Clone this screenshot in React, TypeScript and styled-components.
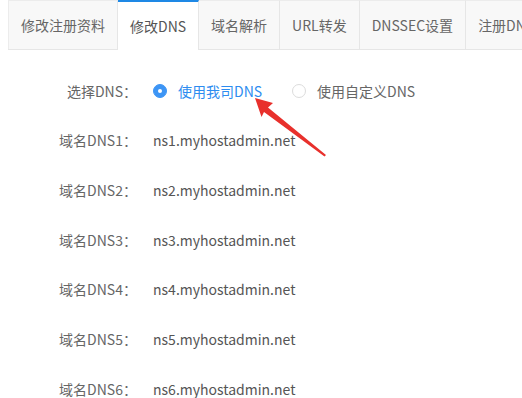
import React, { useState } from "react";
import styled, { createGlobalStyle } from "styled-components";

const GlobalStyle = createGlobalStyle`
  html, body {
    margin: 0;
    padding: 0;
    background: #fff;
    font-family: "Noto Sans CJK SC", "Noto Sans", sans-serif;
    color: #666;
  }
`;

const Page = styled.div`
  position: relative;
  width: 522px;
  height: 398px;
  overflow: hidden;
  padding-left: 8px;
  box-sizing: border-box;
`;

const TabBar = styled.div`
  display: flex;
  height: 50px;
  border-bottom: 1px solid #e6e6e6;
  box-sizing: border-box;
  white-space: nowrap;
`;

const Tab = styled.div<{ $active?: boolean; $first?: boolean }>`
  display: flex;
  align-items: center;
  flex-shrink: 0;
  padding: 0 12px;
  font-size: 14px;
  color: ${(p) => (p.$active ? "#555" : "#666")};
  background: ${(p) => (p.$active ? "#fff" : "#f8f8f8")};
  border-top: ${(p) => (p.$active ? "2px solid #1e88e5" : "1px solid #ececec")};
  border-right: 1px solid #e6e6e6;
  border-left: ${(p) => (p.$first ? "1px solid #ececec" : "none")};
  margin-bottom: ${(p) => (p.$active ? "-1px" : "0")};
  box-sizing: border-box;
`;

const Form = styled.div`
  padding-top: 16px;
`;

const Row = styled.div`
  display: grid;
  grid-template-columns: 129px 1fr;
  column-gap: 16px;
  align-items: center;
  height: 49.67px;
  font-size: 14px;
`;

const Label = styled.div`
  text-align: right;
  color: #666;
`;

const Value = styled.div`
  color: #555;
`;

const RadioGroup = styled.div`
  display: flex;
  align-items: center;
  gap: 30px;
`;

const Option = styled.label<{ $checked?: boolean }>`
  display: flex;
  align-items: center;
  gap: 11px;
  cursor: pointer;
  color: ${(p) => (p.$checked ? "#2d8cf0" : "#666")};
`;

const Dot = styled.span<{ $checked?: boolean }>`
  width: 14px;
  height: 14px;
  border-radius: 50%;
  box-sizing: border-box;
  background: ${(p) => (p.$checked ? "#3d95f5" : "#fff")};
  border: 1px solid ${(p) => (p.$checked ? "#3d95f5" : "#dcdcdc")};
  display: flex;
  align-items: center;
  justify-content: center;
  &::after {
    content: "";
    width: 4px;
    height: 4px;
    border-radius: 50%;
    background: #fff;
    display: ${(p) => (p.$checked ? "block" : "none")};
  }
`;

const Arrow = styled.svg`
  position: absolute;
  left: 0;
  top: 0;
  pointer-events: none;
`;

const tabs = ["修改注册资料", "修改DNS", "域名解析", "URL转发", "DNSSEC设置", "注册DNS服务器"];
const servers = [1, 2, 3, 4, 5, 6];

export default function App() {
  const [mine, setMine] = useState(true);

  return (
    <>
      <GlobalStyle />
      <Page>
        <TabBar>
          {tabs.map((t, i) => (
            <Tab key={t} $active={i === 1} $first={i === 0}>
              {t}
            </Tab>
          ))}
        </TabBar>
        <Form>
          <Row>
            <Label>选择DNS：</Label>
            <RadioGroup>
              <Option $checked={mine} onClick={() => setMine(true)}>
                <Dot $checked={mine} />
                使用我司DNS
              </Option>
              <Option $checked={!mine} onClick={() => setMine(false)}>
                <Dot $checked={!mine} />
                使用自定义DNS
              </Option>
            </RadioGroup>
          </Row>
          {servers.map((n) => (
            <Row key={n}>
              <Label>域名DNS{n}：</Label>
              <Value>ns{n}.myhostadmin.net</Value>
            </Row>
          ))}
        </Form>
        <Arrow width="522" height="398" viewBox="0 0 522 398">
          <polygon
            points="255,98 273,103 268,107.5 326,155 324.5,156.5 264,112 261.5,117"
            fill="#e8302c"
          />
        </Arrow>
      </Page>
    </>
  );
}
